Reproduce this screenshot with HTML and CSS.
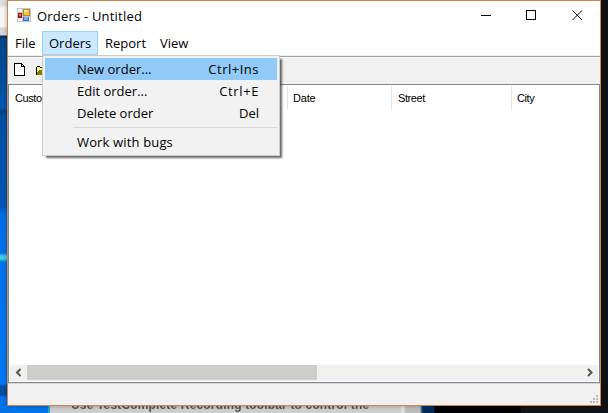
FILE: index.html
```html
<!DOCTYPE html>
<html lang="en">
<head>
<meta charset="utf-8">
<title>Orders - Untitled</title>
<link rel="stylesheet" href="styles.css">
</head>
<body>
<div class="desktop">
  <div class="strip-left"></div>
  <div class="strip-bottom"><span>Use TestComplete Recording toolbar to control the</span></div>
  <main class="window">
    <header class="titlebar">
      <svg class="app-icon" width="14" height="14" viewBox="0 0 14 14" shape-rendering="crispEdges">
        <path fill="#c2c4cc" d="M0 0h14v14H0z"/><path fill="#f4f4f8" d="M1 1h4v3H1zM1 10h4v3H1zM12 9h1v4h-1z"/>
        <path fill="#a51c12" d="M1 5h4v5H1z"/><path fill="#e46a58" d="M2 6h2v2H2z"/>
        <path fill="#b98716" d="M6 1h7v7H6z"/><path fill="#f7c83c" d="M7 2h5v5H7z"/><path fill="#ffe79a" d="M7 2h4v2H7z"/>
        <path fill="#3b69c4" d="M6 9h6v4H6z"/><path fill="#78a9f2" d="M7 9h4v3H7z"/>
      </svg>
      <h1 class="title">Orders - Untitled</h1>
      <svg class="controls" width="102" height="12" viewBox="0 0 102 12" fill="none" stroke="#000" shape-rendering="crispEdges">
        <path d="M0 6.500h10M45.500 1.500h9v9h-9z"/>
        <path shape-rendering="auto" d="M91.500 1.500l9.500 9.500M101 1.500L91.500 11"/>
      </svg>
    </header>
    <nav class="menubar">
      <span class="item file">File</span><span class="item orders">Orders</span><span class="item report">Report</span><span class="item">View</span>
    </nav>
    <div class="toolbar">
      <svg width="36" height="16" viewBox="0 0 36 16" shape-rendering="crispEdges">
        <path fill="#000" d="M0 0h8v1h1v1h1v1h1v10H0z"/><path fill="#fff" d="M1 1h6v3h3v8H1zM8 2h1v1H8z"/>
        <path fill="#000" d="M22 4h1V3h3v1h6v8H22z"/><path fill="#f5f58a" d="M23 4h3v1h5v6h-8z"/><path fill="#808000" d="M23 12V9h1V8h1V7h10l-4 5z"/>
      </svg>
    </div>
    <section class="list">
      <div class="columns"><span class="customer">Customer</span><span class="date">Date</span><span class="street">Street</span><span class="city">City</span></div>
      <div class="rows"></div>
      <div class="scrollbar">
        <svg width="17" height="15" viewBox="0 0 17 15"><path fill="none" stroke="#555" stroke-width="2" d="M10.500 4L7 7.500l3.500 3.500"/></svg>
        <div class="thumb"></div>
        <svg class="next" width="17" height="15" viewBox="0 0 17 15"><path fill="none" stroke="#555" stroke-width="2" d="M7 4l3.500 3.500L7 11"/></svg>
      </div>
    </section>
    <footer class="status">
      <svg width="8" height="8" viewBox="0 0 8 8" shape-rendering="crispEdges"><path fill="#bdbdbd" d="M6 0h2v2H6zM3 3h2v2H3zM6 3h2v2H6zM0 6h2v2H0zM3 6h2v2H3zM6 6h2v2H6z"/></svg>
    </footer>
  </main>
  <div class="popup">
    <div class="entry selected"><span>New order...</span><span class="key-ins">Ctrl+Ins</span></div>
    <div class="entry"><span>Edit order...</span><span class="key-e">Ctrl+E</span></div>
    <div class="entry"><span>Delete order</span><span>Del</span></div>
    <hr>
    <div class="entry bugs"><span>Work with bugs</span></div>
  </div>
</div>
</body>
</html>
```
FILE: styles.css
```css
* { box-sizing: border-box; }
body { margin: 0; font: 13px/22px "Open Sans", "Noto Sans", sans-serif; color: #000; }
.desktop { position: relative; width: 608px; height: 413px; padding-left: 7px; overflow: hidden; background: #101216; }
.strip-left { position: absolute; left: 0; top: 0; width: 50px; height: 413px;
  background: linear-gradient(#ddd 0 5px, #f5f5f5 8px 27px, #d6d6d6 28px 35px, #003466 36px 37px, #00458b 39px, #0057ae 108px, #003d7d 112px, #0050a4 116px, #0057b6 207px, #006ee5 213px, #0072ec 253px, #3ecbe4 256px 259px, #0072ec 262px, #0078f4 384px, #004f9e 386px 395px, #0074ec 397px); }
.strip-bottom { position: absolute; left: 48px; top: 397px; width: 560px; height: 16px; border-left: 2px solid #24aeca;
  background: linear-gradient(90deg, #cecece 0 350px, #e5e5e5 353px, #bcbcbc 356px 370px, #477cad 371px, #002b59 373px 384px, #000 385px 470px, #101216 471px); }
.strip-bottom span { position: absolute; left: 21px; top: 0; font: bold 12px/16px "Liberation Sans", sans-serif; letter-spacing: .16px; white-space: nowrap; color: #555; filter: blur(.6px); }
.window { position: relative; display: flex; flex-direction: column; width: 594px; height: 406px; border: 1px solid #d1864f; background: #fff; box-shadow: 0 0 4px #0005; }
.titlebar { display: flex; align-items: center; height: 30px; padding: 0 17px 0 9px; }
.title { margin: 0 0 0 6px; font-size: 13px; font-weight: 400; letter-spacing: .2px; }
.controls { margin-left: auto; }
.app-icon, .controls { position: relative; top: -1px; }
.menubar { display: flex; height: 24px; line-height: 25px; }
.item { padding: 0 7px; }
.file { width: 34px; }
.orders { width: 56px; padding: 0 6px; border: 1px solid #99d1ff; background: #cce8ff; line-height: 23px; }
.report { width: 55px; }
.toolbar { height: 29px; padding: 7px 0 0 6px; border-top: 1px solid #f0f0f0; background: linear-gradient(#a0a0a0 0 1px, #fff 1px 2px, #f0f0f0 2px); }
.toolbar svg { display: block; }
.list { display: flex; flex-direction: column; height: 299px; border: 1px solid #828790; }
.columns { display: flex; height: 25px; padding-top: 1px; font: 11px/24px "Liberation Sans", sans-serif; letter-spacing: -.4px; }
.columns span { height: 24px; padding-left: 5px; border-right: 1px solid #e5e5e5; }
.columns .customer { width: 279px; padding-left: 6px; }
.columns .date { width: 104px; letter-spacing: -.2px; }
.columns .street { width: 120px; padding-left: 6px; }
.columns .city { border: 0; }
.rows { flex: 1; }
.scrollbar { display: flex; height: 17px; margin: 0 1px; border-bottom: 1px solid #fff; background: #f0f0f0; }
.thumb { width: 290px; height: 15px; background: #cdcdcd; }
.next { margin-left: auto; }
.status { display: flex; flex: 1; align-items: flex-end; justify-content: flex-end; padding: 0 2px 2px 0; border-top: 1px solid #d7d7df; background: #f0f0f0; }
.popup { position: absolute; left: 42px; top: 55px; width: 238px; height: 101px; padding: 2px; border: 1px solid #ccc; background: #f2f2f2; box-shadow: 3px 3px 2px -1px #0009; }
.entry { display: flex; justify-content: space-between; height: 22px; padding: 0 18px 0 32px; }
.key-ins { letter-spacing: .5px; }
.key-e { letter-spacing: .6px; }
.bugs { letter-spacing: .15px; }
.selected { background: #91c9f7; }
.popup hr { height: 1px; margin: 3px 0 3px 28px; border: 0; background: #d7d7d7; }
```
